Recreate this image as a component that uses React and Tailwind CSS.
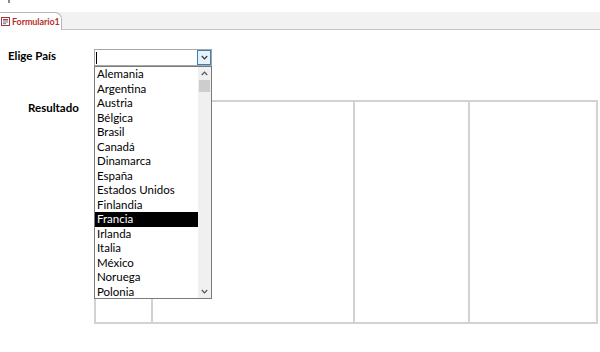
import React from "react";

const countries = [
  "Alemania", "Argentina", "Austria", "Bélgica", "Brasil", "Canadá", "Dinamarca",
  "España", "Estados Unidos", "Finlandia", "Francia", "Irlanda", "Italia",
  "México", "Noruega", "Polonia",
];

function FormIcon() {
  return (
    <svg width="9" height="9" viewBox="0 0 9 9" className="shrink-0">
      <rect x="0.5" y="0.5" width="8" height="8" fill="#fff" stroke="#9a3a3a" />
      <rect x="2" y="2" width="5" height="1.5" fill="#c0392b" />
      <rect x="2" y="4.5" width="5" height="1" fill="#4a78b8" />
      <rect x="2" y="6.2" width="3" height="1" fill="#4a78b8" />
    </svg>
  );
}

export default function App() {
  return (
    <div className="relative w-[600px] h-[352px] overflow-hidden bg-white text-black" style={{ fontFamily: 'Lato, "Open Sans", sans-serif' }}>
      {/* top area */}
      <div className="h-3 relative">
        <div className="absolute left-[8px] top-0 w-[2px] h-[3px] bg-[#888]" />
      </div>
      {/* tab strip */}
      <div className="h-[18px] bg-[#f2f2f2] border-b border-[#c4c4c4] flex items-end">
        <div className="h-[18px] w-[62px] bg-white border-t border-r border-[#b8b8b8] rounded-tr-[7px] flex items-center gap-[2px] pl-[1px] -mb-px relative">
          <FormIcon />
          <span className="text-[9px] font-bold text-[#b8312f] leading-none tracking-[-0.1px]">Formulario1</span>
        </div>
      </div>

      {/* Row 1 */}
      <div className="flex items-center mt-[19px] h-[17px]">
        <div className="w-[94px] pl-[8px] text-[11.5px] font-bold leading-none -mt-[3px]">Elige País</div>
        <div className="w-[118px] h-[17px] border border-[#a6a6a6] flex items-stretch bg-white">
          <div className="flex-1 flex items-center pl-[1px]">
            <div className="w-px h-[12px] bg-black" />
          </div>
          <div className="w-[14px] border border-[#3c7fb1] bg-[#e5f1fb] flex items-center justify-center">
            <svg width="7" height="5" viewBox="0 0 7 5"><path d="M0.8 1 L3.5 3.8 L6.2 1" fill="none" stroke="#333" strokeWidth="1.2" /></svg>
          </div>
        </div>
      </div>

      {/* Row 2 */}
      <div className="flex mt-[34px]">
        <div className="w-[94px] pl-[28px] pt-[1px] text-[11.5px] font-bold leading-[14px]">Resultado</div>
        <div className="w-[504px] h-[224px] border-2 border-[#d2d2d2] flex">
          <div className="w-[57px] border-r-2 border-[#d2d2d2]" />
          <div className="w-[202px] border-r-2 border-[#d2d2d2]" />
          <div className="w-[115px] border-r-2 border-[#d2d2d2]" />
          <div className="flex-1" />
        </div>
      </div>

      {/* Dropdown list overlay */}
      <div className="absolute left-[94px] top-[66px] w-[118px] h-[233px] bg-white border border-[#7a7a7a] flex">
        <div className="flex-1 flex flex-col">
          {countries.map((c) => (
            <div
              key={c}
              className={
                "h-[14.5px] pl-[2px] text-[11.5px] leading-[14.5px] whitespace-nowrap " +
                (c === "Francia" ? "bg-black text-white" : "text-black")
              }
            >
              {c}
            </div>
          ))}
        </div>
        <div className="w-[13px] bg-[#f0f0f0] flex flex-col">
          <div className="h-[13px] flex items-center justify-center">
            <svg width="7" height="5" viewBox="0 0 7 5"><path d="M0.8 4 L3.5 1.2 L6.2 4" fill="none" stroke="#555" strokeWidth="1.2" /></svg>
          </div>
          <div className="h-[12px] mx-[1px] bg-[#cdcdcd]" />
          <div className="flex-1" />
          <div className="h-[13px] flex items-center justify-center">
            <svg width="7" height="5" viewBox="0 0 7 5"><path d="M0.8 1 L3.5 3.8 L6.2 1" fill="none" stroke="#555" strokeWidth="1.2" /></svg>
          </div>
        </div>
      </div>
    </div>
  );
}
